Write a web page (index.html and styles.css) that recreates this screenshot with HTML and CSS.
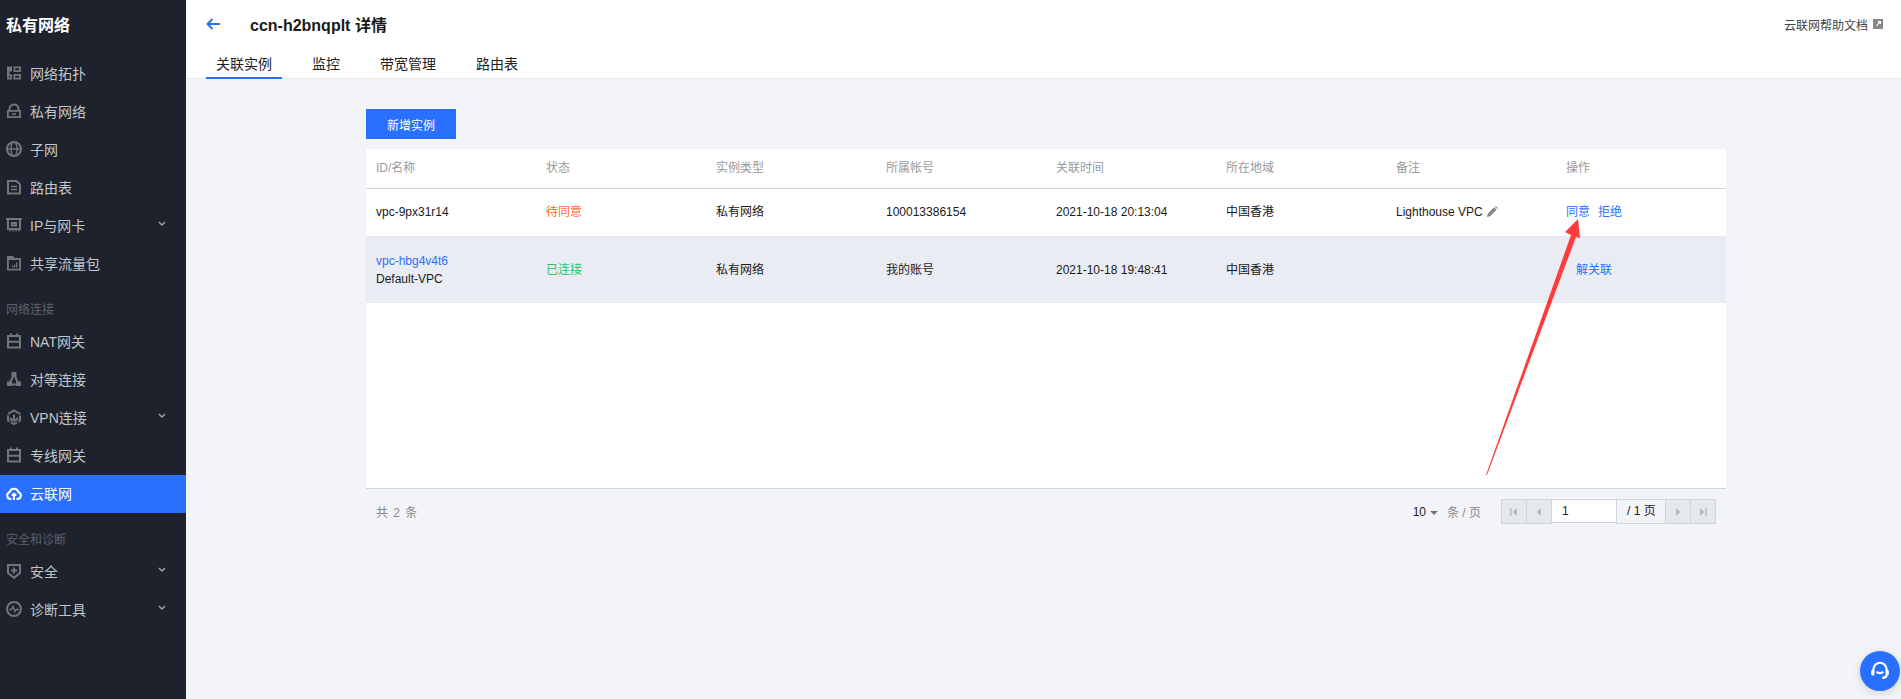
FILE: index.html
```html
<!DOCTYPE html>
<html lang="zh-CN">
<head>
  <meta charset="UTF-8">
  <title>ccn-h2bnqplt 详情</title>
  <link rel="stylesheet" href="styles.css">
</head>
<body>
  <div class="app">
    <aside class="sidebar">
      <div class="side-title">私有网络</div>
      <nav class="side-nav">
        <a class="nav-item"><svg class="nav-icon" viewBox="0 0 16 16"><path d="M1 1.500h5v5H3.500v3H6v5H1zM2.800 3.200v9.600h1.400v-1.600H2.800zM7.500 1.500H15v5.500H7.500zM9.200 3.200v2.100h4.100V3.200zM7.500 9H15v5.500H7.500zM9.200 10.700v2.100h4.100v-2.100z" fill-rule="evenodd"/></svg>网络拓扑</a>
        <a class="nav-item"><svg class="nav-icon" viewBox="0 0 16 16"><path d="M1 7h14v8H1zM2.800 8.700v4.600h10.400V8.700zM6 10.200h4v1.600H6z" fill-rule="evenodd"/><path class="line" d="M3.500 7.500V6a4.500 4.500 0 0 1 9 0v1.500"/></svg>私有网络</a>
        <a class="nav-item"><svg class="nav-icon" viewBox="0 0 16 16"><circle class="line" cx="8" cy="8" r="7"/><ellipse class="line thin" cx="8" cy="8" rx="3" ry="7"/><path class="line thin" d="M1 8h14"/></svg>子网</a>
        <a class="nav-item"><svg class="nav-icon" viewBox="0 0 16 16"><path class="line" d="M2 2h8.500L14 5.500V14.500H2z"/><path class="line thin" d="M5 7.500h6M5 10.500h6"/></svg>路由表</a>
        <a class="nav-item"><svg class="nav-icon" viewBox="0 0 16 16"><path class="line" d="M0 2h16M2 2v10h12V2M6 6h4v2.500H6z"/><path class="line thin" d="M4 12v2.500M7 12v2.500M10 12v2.500M13 12v2.500"/></svg>IP与网卡<svg class="nav-arrow" viewBox="0 0 8 5"><path d="M1 1l3 3 3-3"/></svg></a>
        <a class="nav-item"><svg class="nav-icon" viewBox="0 0 16 16"><path d="M1 1h6l1.500 2H15v12.500H1zM2.800 5v8.700h10.400V5zM6 10.500h1.300v2H6zM8 9.500h1.300v3H8zM10 7.500h1.300v5H10z" fill-rule="evenodd"/></svg>共享流量包</a>
        <div class="nav-group">网络连接</div>
        <a class="nav-item"><svg class="nav-icon" viewBox="0 0 16 16"><path class="line" d="M2 3h12v11.500H2zM2 8.800h12M5 .500V3M11 .500V3"/></svg>NAT网关</a>
        <a class="nav-item"><svg class="nav-icon" viewBox="0 0 16 16"><path class="line" d="M8 3L3.500 13M8 3l4.500 10M3 13.500h10"/><rect x="5.500" y="1" width="5" height="4.500"/><rect x="1" y="10.500" width="5" height="4.500"/><rect x="10" y="10.500" width="5" height="4.500"/></svg>对等连接</a>
        <a class="nav-item"><svg class="nav-icon" viewBox="0 0 16 16"><path class="line" d="M8 1.500l6 3.500v6.500l-6 3.500-6-3.500V5z" stroke-dasharray="7 1.500"/><path class="line" d="M4.500 8.500a3.500 3 0 0 0 7 0M8 5.500v5.500"/></svg>VPN连接<svg class="nav-arrow" viewBox="0 0 8 5"><path d="M1 1l3 3 3-3"/></svg></a>
        <a class="nav-item"><svg class="nav-icon" viewBox="0 0 16 16"><path class="line" d="M2 3h12v11.500H2zM2 8.800h12M5 .500V3M11 .500V3"/></svg>专线网关</a>
        <a class="nav-item active"><svg class="nav-icon" viewBox="0 0 16 16"><path class="line" d="M5.500 14H4.500A3.500 3.500 0 0 1 3.500 7.200a4.700 4.700 0 0 1 9 0A3.500 3.500 0 0 1 11.500 14h-1"/><path class="line" d="M8 15V9M5.800 10.800L8 8.600l2.200 2.200"/></svg>云联网</a>
        <div class="nav-group">安全和诊断</div>
        <a class="nav-item"><svg class="nav-icon" viewBox="0 0 16 16"><path class="line" d="M2 2h12v8l-6 4.800L2 10z"/><path class="line" d="M5 7.500h6M8 4.500v6"/></svg>安全<svg class="nav-arrow" viewBox="0 0 8 5"><path d="M1 1l3 3 3-3"/></svg></a>
        <a class="nav-item"><svg class="nav-icon" viewBox="0 0 16 16"><circle class="line" cx="8" cy="8" r="7"/><path class="line thin" d="M3 8.500h2.500L7 5.500l2 5 1.300-2H13"/></svg>诊断工具<svg class="nav-arrow" viewBox="0 0 8 5"><path d="M1 1l3 3 3-3"/></svg></a>
      </nav>
    </aside>

    <main class="main">
      <header class="top">
        <div class="top-row">
          <svg class="back" viewBox="0 0 14 12"><path d="M14 6H1.500M6.500 1l-5 5 5 5"/></svg>
          <h1 class="page-title">ccn-h2bnqplt 详情</h1>
          <a class="help">云联网帮助文档<svg class="help-icon" viewBox="0 0 10 10"><path d="M0 0h10v10H0zM5 2v1.200h1L3 6.200l.8.800 3-3v1H8V2z" fill-rule="evenodd"/></svg></a>
        </div>
        <div class="tabs">
          <a class="tab current">关联实例</a>
          <a class="tab">监控</a>
          <a class="tab">带宽管理</a>
          <a class="tab">路由表</a>
        </div>
      </header>

      <section class="content">
        <button class="btn-add">新增实例</button>
        <div class="panel">
          <table class="grid">
            <thead>
              <tr>
                <th>ID/名称</th><th>状态</th><th>实例类型</th><th>所属帐号</th><th>关联时间</th><th>所在地域</th><th>备注</th><th>操作</th>
              </tr>
            </thead>
            <tbody>
              <tr class="row-one">
                <td>vpc-9px31r14</td>
                <td class="wait">待同意</td>
                <td>私有网络</td>
                <td>100013386154</td>
                <td>2021-10-18 20:13:04</td>
                <td>中国香港</td>
                <td>Lighthouse VPC<svg class="pen" viewBox="0 0 10 10"><path d="M0 10l.6-2.900L6.500 1.200l2.300 2.300L2.900 9.400zM7.200.5L8 0l2 2-.5.8z"/></svg></td>
                <td><a class="link">同意</a><a class="link link-next">拒绝</a></td>
              </tr>
              <tr class="row-two">
                <td><a class="link">vpc-hbg4v4t6</a><div>Default-VPC</div></td>
                <td class="ok">已连接</td>
                <td>私有网络</td>
                <td>我的账号</td>
                <td>2021-10-18 19:48:41</td>
                <td>中国香港</td>
                <td></td>
                <td><a class="link link-un">解关联</a></td>
              </tr>
            </tbody>
          </table>
        </div>
        <div class="pager">
          <span class="total">共 2 条</span>
          <span class="size">10<i class="caret"></i><em>条 / 页</em></span>
          <div class="pages">
            <span class="pg-btn"><svg viewBox="0 0 8 8"><path d="M0 0h1.500v8H0zM7 0v8L2.500 4z"/></svg></span>
            <span class="pg-btn"><svg viewBox="0 0 8 8"><path d="M6 0v8L1.500 4z"/></svg></span>
            <span class="pg-input">1</span>
            <span class="pg-count">/ 1 页</span>
            <span class="pg-btn"><svg viewBox="0 0 8 8"><path d="M2 0v8l4.500-4z"/></svg></span>
            <span class="pg-btn"><svg viewBox="0 0 8 8"><path d="M8 0H6.500v8H8zM1 0v8l4.500-4z"/></svg></span>
          </div>
        </div>
      </section>
    </main>
  </div>

  <svg class="red-arrow" viewBox="0 0 1901 699"><polygon points="1486,475 1571,235 1565,232 1578,219 1580,238 1576,237 1487,475"/></svg>

  <a class="chat"><svg viewBox="0 0 20 20"><path d="M4 10V8.500a6 6 0 0 1 12 0V10"/><path d="M7 10.500a3.500 3 0 0 0 6 0"/><path d="M16 13.500c0 1.800-1.500 2.800-4 2.800"/><rect class="solid" x="2" y="9" width="3" height="5" rx="1"/><rect class="solid" x="15" y="9" width="3" height="5" rx="1"/></svg></a>
</body>
</html>
```

FILE: styles.css
```css
* {
  margin: 0;
  padding: 0;
  box-sizing: border-box;
}

body {
  font-family: "Liberation Sans", "Noto Sans CJK SC", sans-serif;
  font-size: 12px;
  background: #f2f4f8;
  color: #000;
  height: 100vh;
  overflow: hidden;
}

.app {
  display: flex;
  height: 699px;
}

/* sidebar */
.sidebar {
  width: 186px;
  flex-shrink: 0;
  background: #1e222d;
}

.side-title {
  height: 55px;
  padding-left: 6px;
  font-size: 16px;
  font-weight: bold;
  line-height: 52px;
  color: #fff;
}

.nav-item {
  display: flex;
  align-items: center;
  height: 38px;
  padding: 0 0 2px 6px;
  font-size: 14px;
  color: #c1c6c8;
}

.nav-item.active {
  background: #2970ff;
  color: #fff;
}

.nav-icon {
  width: 16px;
  height: 16px;
  margin-right: 8px;
  flex-shrink: 0;
  fill: #71757c;
}

.nav-icon .line {
  fill: none;
  stroke: #71757c;
  stroke-width: 2;
}

.nav-icon .thin {
  stroke-width: 1.4;
}

.active .nav-icon .line {
  stroke: #fff;
}

.nav-arrow {
  width: 8px;
  height: 5px;
  margin-left: auto;
  margin-right: 20px;
  margin-bottom: 4px;
  fill: none;
  stroke: #a5a9ad;
  stroke-width: 1.4;
}

.nav-group {
  height: 40px;
  padding: 19px 0 0 6px;
  font-size: 12px;
  line-height: 16px;
  color: #5c616a;
}

/* top bar */
.main {
  flex: 1;
  min-width: 0;
}

.top {
  height: 79px;
  background: #fff;
  border-bottom: 1px solid #e7eaef;
}

.top-row {
  display: flex;
  align-items: center;
  height: 48px;
  padding: 0 18px 0 20px;
}

.back {
  width: 14px;
  height: 12px;
  fill: none;
  stroke: #2970ff;
  stroke-width: 2;
}

.page-title {
  margin-left: 30px;
  font-size: 16px;
  font-weight: bold;
  color: #1a1a1a;
}

.help {
  display: flex;
  align-items: center;
  margin-left: auto;
  color: #444;
}

.help-icon {
  width: 10px;
  height: 10px;
  margin-left: 5px;
  fill: #888;
}

.tabs {
  display: flex;
  gap: 20px;
  height: 30px;
  padding-left: 20px;
}

.tab {
  padding: 0 10px;
  font-size: 14px;
  line-height: 32px;
  color: #222;
}

.tab.current {
  border-bottom: 2px solid #2970ff;
  height: 31px;
}

/* table */
.content {
  padding: 30px 175px 0 180px;
}

.btn-add {
  display: block;
  width: 90px;
  height: 30px;
  border: none;
  background: #2970ff;
  color: #fff;
  font: inherit;
}

.panel {
  height: 340px;
  margin-top: 10px;
  background: #fff;
  border-bottom: 1px solid #cfd5de;
}

.grid {
  width: 100%;
  border-collapse: collapse;
  table-layout: fixed;
}

.grid th,
.grid td {
  padding: 0 10px;
  text-align: left;
  font-weight: normal;
  line-height: 18px;
}

.grid th {
  height: 39px;
  color: #9a9a9a;
  border-bottom: 1px solid #cfd5de;
}

.row-one td {
  height: 48px;
  border-bottom: 1px solid #e7eaef;
  color: #1a1a1a;
}

.row-two td {
  height: 67px;
  background: #e9ecf2;
  color: #1a1a1a;
}

.grid .wait {
  color: #ff6a2b;
}

.grid .ok {
  color: #2bc46a;
}

.link {
  color: #2970ff;
}

.link-next {
  margin-left: 8px;
}

.link-un {
  margin-left: 10px;
}

.pen {
  width: 11px;
  height: 11px;
  margin-left: 4px;
  vertical-align: -1px;
  fill: #888;
}

/* pager */
.pager {
  display: flex;
  align-items: center;
  height: 25px;
  margin-top: 10px;
  padding: 0 10px;
}

.total {
  color: #888;
  word-spacing: 2px;
}

.size {
  display: flex;
  align-items: center;
  margin-left: auto;
  color: #222;
}

.caret {
  width: 0;
  height: 0;
  margin: 2px 9px 0 4px;
  border-style: solid;
  border-width: 4px 4px 0;
  border-color: #777 transparent transparent;
}

.size em {
  font-style: normal;
  color: #888;
}

.pages {
  display: flex;
  height: 25px;
  margin-left: 20px;
}

.pg-btn {
  display: flex;
  align-items: center;
  justify-content: center;
  width: 25.5px;
  background: #e5e8ed;
  border: 1px solid #cfd5de;
}

.pg-btn + .pg-btn {
  border-left: none;
}

.pg-btn svg {
  width: 8px;
  height: 8px;
  fill: #b4b8c0;
}

.pg-input {
  width: 64px;
  height: 24px;
  padding-left: 10px;
  line-height: 22px;
  background: #fff;
  border-top: 1px solid #cfd5de;
  border-bottom: 1px solid #cfd5de;
  color: #222;
}

.pg-count {
  width: 49px;
  padding-left: 10px;
  line-height: 23px;
  border: 1px solid #cfd5de;
  border-right: none;
  color: #222;
}

/* overlays */
.red-arrow {
  position: absolute;
  left: 0;
  top: 0;
  width: 1901px;
  height: 699px;
  fill: #ff3b3b;
  pointer-events: none;
}

.chat {
  position: absolute;
  left: 1860px;
  top: 651px;
  display: flex;
  align-items: center;
  justify-content: center;
  width: 40px;
  height: 40px;
  border-radius: 50%;
  background: #2970ff;
  box-shadow: 0 2px 8px rgba(0, 0, 0, 0.15);
}

.chat svg {
  width: 22px;
  height: 22px;
  fill: none;
  stroke: #fff;
  stroke-width: 2;
}

.chat .solid {
  fill: #fff;
  stroke: none;
}
```
